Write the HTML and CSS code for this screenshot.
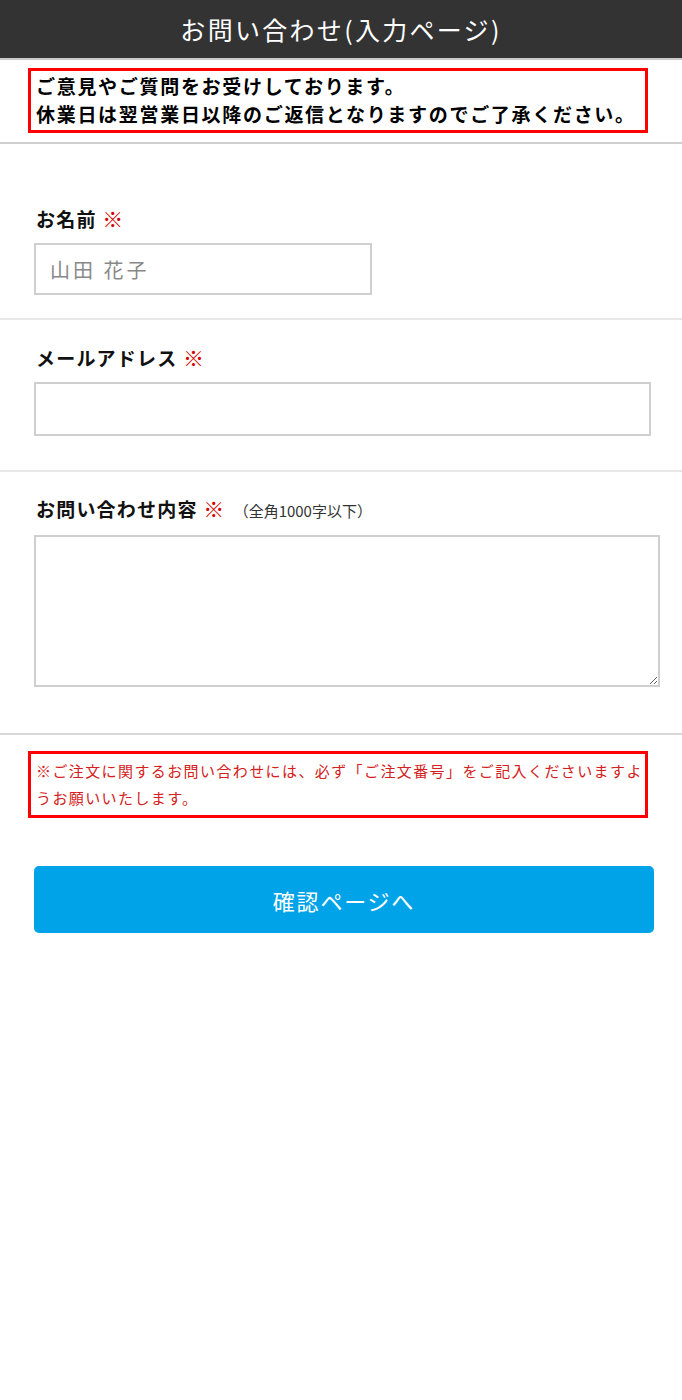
FILE: index.html
```html
<!DOCTYPE html>
<html lang="ja">
<head>
<meta charset="utf-8">
<title>お問い合わせ(入力ページ)</title>
<link rel="stylesheet" href="styles.css">
</head>
<body>
<header class="page-header">
  <h1 class="page-title">お問い合わせ(入力ページ)</h1>
</header>
<section class="intro">
  <div class="intro-box">
    <p>ご意見やご質問をお受けしております。</p>
    <p>休業日は翌営業日以降のご返信となりますのでご了承ください。</p>
  </div>
</section>
<form class="form">
  <div class="row row-name">
    <label class="label">お名前 <span class="req">※</span></label>
    <input class="field field-name" type="text" placeholder="山田 花子">
  </div>
  <div class="row row-mail">
    <label class="label">メールアドレス <span class="req">※</span></label>
    <input class="field field-mail" type="email">
  </div>
  <div class="row row-body">
    <label class="label">お問い合わせ内容 <span class="req">※</span> <span class="note">（全角1000字以下）</span></label>
    <textarea class="field field-body"></textarea>
  </div>
  <div class="caution">
    <div class="caution-box">※ご注文に関するお問い合わせには、必ず「ご注文番号」をご記入くださいますようお願いいたします。</div>
  </div>
  <div class="actions">
    <button class="submit" type="button">確認ページへ</button>
  </div>
</form>
</body>
</html>
```
FILE: styles.css
```css
* { box-sizing: border-box; }
html, body { margin: 0; padding: 0; background: #fff; }
body {
  font-family: "Noto Sans CJK JP", "Noto Sans", sans-serif;
  color: #111;
}
.page-header {
  height: 60px;
  background: #333;
  border-bottom: 2px solid #c8c8c8;
  display: flex;
  align-items: center;
  justify-content: center;
}
.page-title {
  margin: 0;
  color: #fff;
  font-size: 25px;
  font-weight: 400;
  line-height: 1;
  letter-spacing: 2.3px;
}
.intro {
  padding: 8px 34px 9px 28px;
  border-bottom: 2px solid #d0d0d0;
}
.intro-box {
  border: 3px solid #f00;
  padding: 1px 0 2px 5px;
  width: 620px;
}
.intro-box p {
  margin: 0;
  font-size: 19px;
  font-weight: 700;
  line-height: 28px;
  letter-spacing: 1.7px;
  color: #000;
  white-space: nowrap;
}
.row {
  border-bottom: 2px solid #e8e8e8;
  padding: 0 22px 0 34px;
  display: flex;
  flex-direction: column;
  align-items: flex-start;
}
.row-name { padding-top: 61px; padding-bottom: 23px; }
.row-mail { padding-top: 24px; padding-bottom: 34px; }
.row-body { padding-top: 23px; padding-bottom: 46px; border-bottom-color: #d8d8d8; }
.label {
  font-size: 19px;
  font-weight: 700;
  line-height: 26px;
  padding-left: 2px;
  margin-bottom: 11px;
  color: #111;
  letter-spacing: 1.2px;
}
.req { color: #d40000; font-weight: 700; font-size: 21px; letter-spacing: 0; }
.note {
  font-size: 15px;
  font-weight: 400;
  color: #333;
  margin-left: 4px;
  letter-spacing: 0;
}
.field {
  border: 2px solid #cfcfcf;
  background: #fff;
  font-family: inherit;
  font-size: 20px;
  outline: none;
  margin: 0;
}
.field-name {
  width: 338px;
  height: 52px;
  padding: 0 14px;
  color: #333;
  letter-spacing: 3px;
}
.field-name::placeholder { color: #888; letter-spacing: 3px; }
.field-mail { width: 617px; height: 54px; padding: 0 14px; }
.field-body {
  width: 626px;
  height: 152px;
  resize: vertical;
  padding: 8px;
  display: block;
}
.caution { padding: 16px 34px 0 28px; }
.caution-box {
  border: 3px solid #f00;
  width: 620px;
  padding: 3px 0 4px 5px;
  color: #d42020;
  font-size: 15px;
  line-height: 27px;
  letter-spacing: 1.4px;
}
.actions { padding: 48px 28px 0 34px; }
.submit {
  width: 620px;
  height: 67px;
  border: none;
  border-radius: 5px;
  background: #00a3e8;
  color: #fff;
  font-family: inherit;
  font-size: 22px;
  letter-spacing: 1.8px;
  cursor: pointer;
}
```
